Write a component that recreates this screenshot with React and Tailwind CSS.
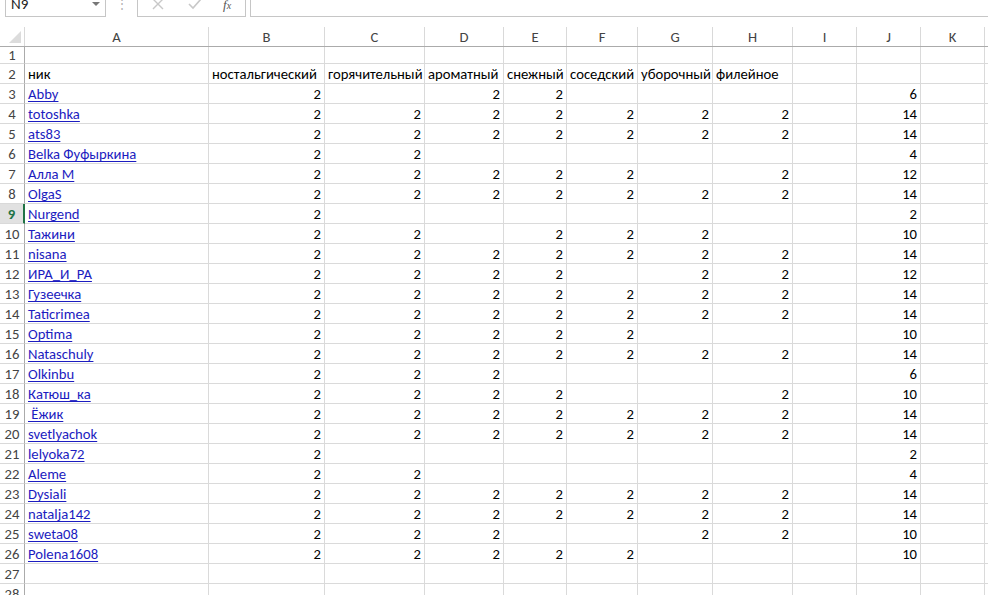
import React from "react";

const cols = [
  { k: "A", w: "w-[184px]" },
  { k: "B", w: "w-[116px]" },
  { k: "C", w: "w-[100px]" },
  { k: "D", w: "w-[79px]" },
  { k: "E", w: "w-[63px]" },
  { k: "F", w: "w-[71px]" },
  { k: "G", w: "w-[75px]" },
  { k: "H", w: "w-[80px]" },
  { k: "I", w: "w-[64px]" },
  { k: "J", w: "w-[64px]" },
  { k: "K", w: "w-[64px]" },
  { k: "L", w: "w-[64px]" },
];

// B..H flags as a 7-char string, "1" = 2 in that cell
const rows = [
  ["Abby", "1011000", 6],
  ["totoshka", "1111111", 14],
  ["ats83", "1111111", 14],
  ["Belka Фуфыркина", "1100000", 4],
  ["Алла М", "1111101", 12],
  ["OlgaS", "1111111", 14],
  ["Nurgend", "1000000", 2],
  ["Тажини", "1101110", 10],
  ["nisana", "1111111", 14],
  ["ИРА_И_РА", "1111011", 12],
  ["Гузеечка", "1111111", 14],
  ["Taticrimea", "1111111", 14],
  ["Optima", "1111100", 10],
  ["Nataschuly", "1111111", 14],
  ["Olkinbu", "1110000", 6],
  ["Катюш_ка", "1111001", 10],
  ["\u00a0Ёжик", "1111111", 14],
  ["svetlyachok", "1111111", 14],
  ["lelyoka72", "1000000", 2],
  ["Aleme", "1100000", 4],
  ["Dysiali", "1111111", 14],
  ["natalja142", "1111111", 14],
  ["sweta08", "1110011", 10],
  ["Polena1608", "1111100", 10],
];

const headers = ["ник", "ностальгический", "горячительный", "ароматный", "снежный", "соседский", "уборочный", "филейное"];

function RowHead({ n, active, tall }) {
  return (
    <div
      className={
        "w-[25px] shrink-0 flex items-center justify-center pt-[1px] border-b border-[#d9d9d9] " +
        (tall ? "h-[20px] " : "h-[17px] ") +
        (active
          ? "bg-[#e1e1e1] text-[#217346] font-bold border-r-2 border-r-[#217346]"
          : "text-[#444] border-r border-r-[#ababab]")
      }
    >
      {n}
    </div>
  );
}

function Cell({ w, children, right, link, h = "h-[20px]" }) {
  return (
    <div
      className={
        w +
        " " +
        h +
        " shrink-0 border-r border-b border-[#dadada] px-[3px] pb-[1px] flex items-end whitespace-nowrap overflow-visible " +
        (right ? "justify-end " : "") +
        (link ? "text-[#1c1cc0] underline underline-offset-2" : "text-black")
      }
    >
      {children}
    </div>
  );
}

export default function App() {
  return (
    <div
      className="w-[988px] h-[595px] overflow-hidden bg-white text-[14.667px] leading-none"
      style={{ fontFamily: "Carlito, Roboto, 'Liberation Sans', sans-serif" }}
    >
      {/* formula bar */}
      <div className="h-[17px] relative overflow-hidden">
        <div className="absolute left-0 right-0 bottom-0 h-[26px] flex items-stretch">
          <div className="ml-[5px] w-[101px] border border-[#c6c6c6] flex items-center justify-between pl-[5px] pr-[5px] text-[#222]">
            <span className="text-[15px]">N9</span>
            <svg width="8" height="5" viewBox="0 0 8 5"><path d="M0 0h8L4 4z" fill="#777" /></svg>
          </div>
          <div className="w-[31px] flex items-center justify-center text-[#b0b0b0] text-[12px]">⋮</div>
          <div className="w-[109px] border border-[#c6c6c6] flex items-center pl-[13px]">
            <svg width="14" height="14" viewBox="0 0 14 14"><path d="M2 2l10 10M12 2L2 12" stroke="#c8c8c8" strokeWidth="1.4" /></svg>
            <svg className="ml-[22px]" width="16" height="14" viewBox="0 0 16 14"><path d="M2 7l4 4 8-9" stroke="#c8c8c8" strokeWidth="1.6" fill="none" /></svg>
            <span className="ml-[20px] italic text-[#555] text-[13px]" style={{ fontFamily: "'Liberation Serif', serif" }}>
              f<span className="text-[10px]">x</span>
            </span>
          </div>
          <div className="ml-[4px] flex-1 border border-[#c6c6c6] border-r-0" />
        </div>
      </div>
      <div className="h-[10px]" />

      {/* column headers */}
      <div className="flex h-[20px] border-b border-[#ababab]">
        <div className="w-[25px] shrink-0 border-r border-[#d9d9d9] relative">
          <svg className="absolute right-[3px] bottom-[3px]" width="12" height="12" viewBox="0 0 12 12"><path d="M12 0v12H0z" fill="#dcdcdc" /></svg>
        </div>
        {cols.map((c) => (
          <div key={c.k} className={c.w + " shrink-0 border-r border-[#d9d9d9] flex items-center justify-center pt-[1px] text-[#444]"}>
            {c.k}
          </div>
        ))}
      </div>

      {/* row 1 */}
      <div className="flex">
        <RowHead n={1} />
        {cols.map((c) => (
          <Cell key={c.k} w={c.w} h="h-[17px]" />
        ))}
      </div>

      {/* row 2 */}
      <div className="flex">
        <RowHead n={2} tall />
        {cols.map((c, i) => (
          <Cell key={c.k} w={c.w}>{headers[i] || ""}</Cell>
        ))}
      </div>

      {rows.map(([name, flags, total], r) => (
        <div key={r} className="flex">
          <RowHead n={r + 3} tall active={r + 3 === 9} />
          {cols.map((c, i) => {
            if (i === 0) return <Cell key={c.k} w={c.w} link>{name}</Cell>;
            if (i >= 1 && i <= 7)
              return (
                <Cell key={c.k} w={c.w} right>
                  {flags[i - 1] === "1" ? 2 : ""}
                </Cell>
              );
            if (i === 9) return <Cell key={c.k} w={c.w} right>{total}</Cell>;
            return <Cell key={c.k} w={c.w} />;
          })}
        </div>
      ))}

      {[27, 28].map((n) => (
        <div key={n} className="flex">
          <RowHead n={n} tall />
          {cols.map((c) => (
            <Cell key={c.k} w={c.w} />
          ))}
        </div>
      ))}
    </div>
  );
}
